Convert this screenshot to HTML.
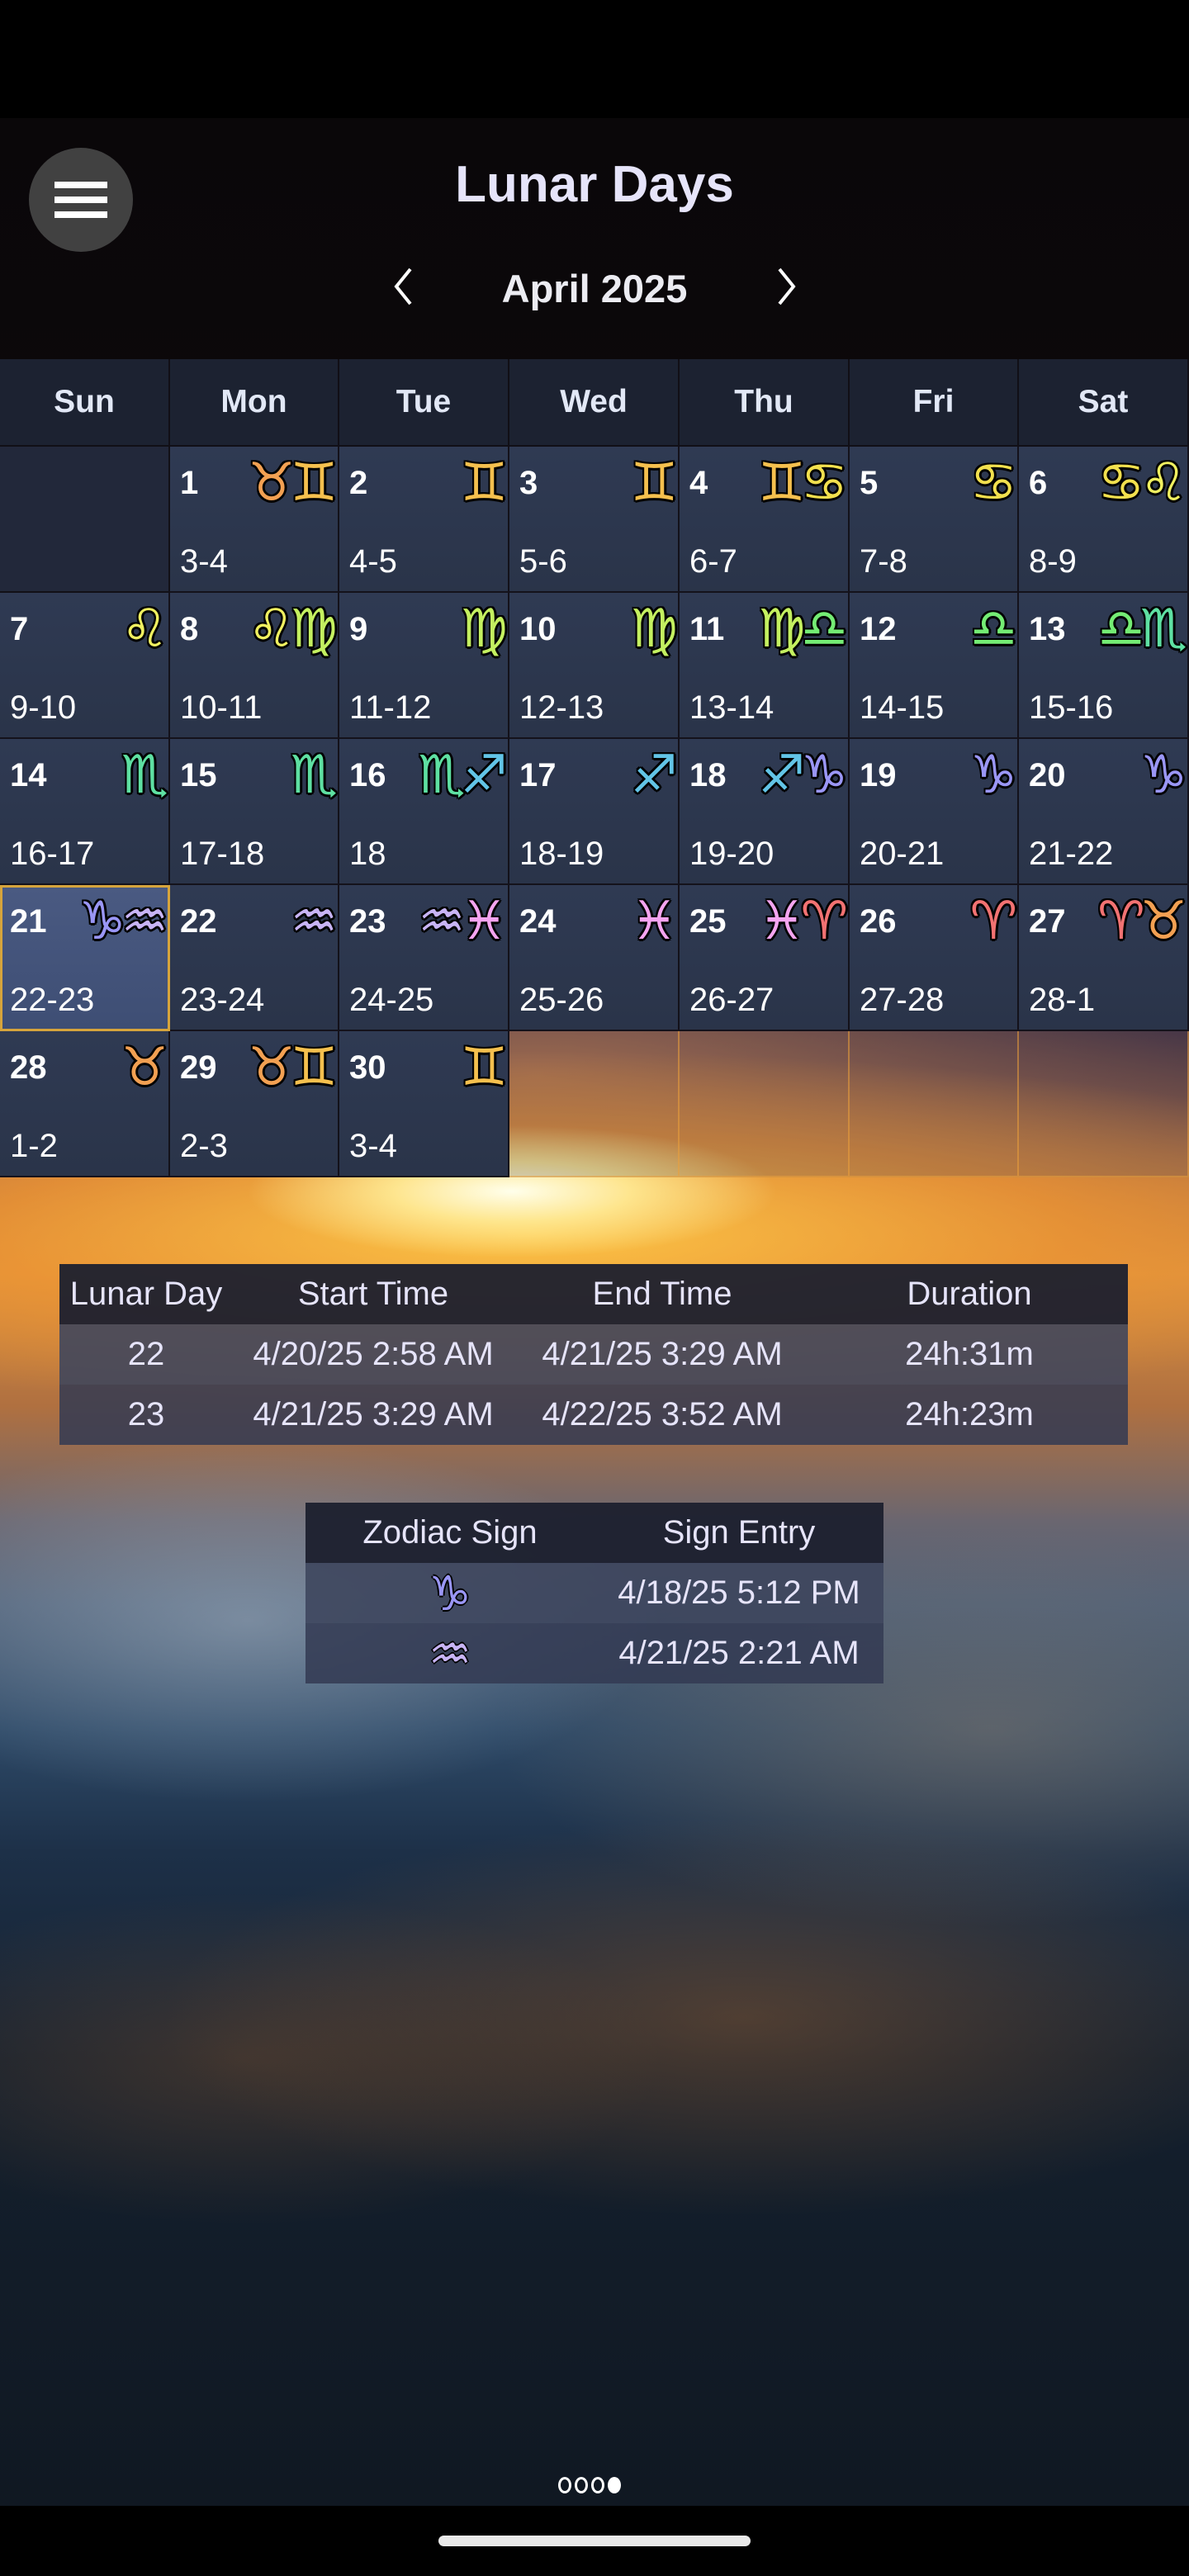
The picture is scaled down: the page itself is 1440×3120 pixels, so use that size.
<!DOCTYPE html>
<html><head><meta charset="utf-8"><style>
*{margin:0;padding:0;box-sizing:border-box}
body{width:1440px;height:3120px;position:relative;overflow:hidden;background:#000;font-family:"Liberation Sans",sans-serif}
#bg{position:absolute;left:0;top:143px;width:1440px;height:2892px;
background:
radial-gradient(ellipse 320px 80px at 620px 1300px,rgba(255,255,235,1),rgba(255,235,150,.9) 45%,rgba(255,200,80,0) 100%),
radial-gradient(ellipse 1200px 220px at 640px 1350px,rgba(255,200,70,.95),rgba(240,150,50,.75) 55%,rgba(210,110,50,0) 100%),
radial-gradient(ellipse 800px 260px at 650px 1160px,rgba(220,140,80,.7),rgba(140,80,80,0) 100%),
radial-gradient(ellipse 500px 220px at 300px 1820px,rgba(170,185,200,.5),rgba(100,130,160,0) 100%),
radial-gradient(ellipse 600px 240px at 1200px 1950px,rgba(150,130,110,.45),rgba(100,100,110,0) 100%),
radial-gradient(ellipse 700px 240px at 900px 2300px,rgba(150,95,50,.45),rgba(60,50,50,0) 100%),
radial-gradient(ellipse 500px 200px at 300px 2350px,rgba(140,90,50,.35),rgba(60,50,50,0) 100%),
linear-gradient(180deg,#0a0709 0px,#0c080b 400px,#221a26 850px,#4a3440 1100px,#a86a44 1260px,#d89040 1400px,#b07040 1560px,#6a6670 1700px,#4e6078 1800px,#2e4a68 1950px,#1d3048 2100px,#14202e 2350px,#101822 2892px)}
.hdr{position:absolute;color:#e6e4fa;font-weight:bold;text-align:center}
.menu{position:absolute;left:35px;top:179px;width:126px;height:126px;border-radius:50%;background:#414141}
.menu i{position:absolute;left:31px;width:64px;height:8px;background:#fff}
.grid{position:absolute;left:0;top:435px;width:1440px}
.c{position:absolute;width:206px;border-right:2px solid rgba(15,12,18,.85);border-bottom:2px solid rgba(15,12,18,.85);color:#fff}
.h{height:106px;background:#1c2231;color:#e2e8f6;font-weight:bold;font-size:39px;text-align:center;line-height:104px}
.d{height:177px;background:linear-gradient(180deg,#2f3a53,#2a3449)}
.d .n{position:absolute;left:12px;top:22px;font-size:40px;font-weight:bold}
.d .r{position:absolute;left:12px;top:117px;font-size:40px}
.d .z{position:absolute;right:6px;top:4px;font-family:"DejaVu Sans",sans-serif;font-size:64px;line-height:80px;letter-spacing:-6px;
text-shadow:-2px -2px 0 #000,2px -2px 0 #000,-2px 2px 0 #000,2px 2px 0 #000,0 3px 0 #000,0 -2px 0 #000,3px 0 0 #000,-2px 0 0 #000}
.e{height:177px;background:rgba(50,60,95,.22);border-color:rgba(235,160,60,.55)}
.blank{background:#22283a}
.sel{background:linear-gradient(180deg,#4a5a82,#3e4e74);outline:3px solid #d6a43c;outline-offset:-3px}
table{position:absolute;border-collapse:collapse;color:#e6e4fa;font-size:40px;text-align:center;white-space:nowrap}
td,th{height:73px;font-weight:normal;padding:0}
tr.th{background:rgba(28,32,46,.95)}
tr.r1{background:rgba(60,68,92,.88)}
tr.r2{background:rgba(50,58,82,.85)}
.zg{font-family:'DejaVu Sans',sans-serif;font-size:58px;text-shadow:-2px 0 #000,2px 0 #000,0 2px #000,0 -2px #000}
</style></head><body>
<div id="bg"></div>
<div class="menu"><i style="top:41px"></i><i style="top:59px"></i><i style="top:77px"></i></div>
<div class="hdr" style="left:420px;width:600px;top:188px;font-size:62px">Lunar Days</div>
<div class="hdr" style="left:520px;width:400px;top:322px;font-size:47px;color:#ececf2">April 2025</div>
<svg style="position:absolute;left:470px;top:322px" width="36" height="50"><path d="M27 4 L10 25 L27 46" stroke="#fff" stroke-width="4" fill="none"/></svg>
<svg style="position:absolute;left:935px;top:322px" width="36" height="50"><path d="M9 4 L26 25 L9 46" stroke="#fff" stroke-width="4" fill="none"/></svg>

<div class="grid" id="g"></div>

<table style="left:72px;top:1531px;width:1294px">
<tr class="th"><th style="width:210px">Lunar Day</th><th style="width:340px">Start Time</th><th style="width:360px">End Time</th><th>Duration</th></tr>
<tr class="r1"><td>22</td><td>4/20/25 2:58 AM</td><td>4/21/25 3:29 AM</td><td>24h:31m</td></tr>
<tr class="r2"><td>23</td><td>4/21/25 3:29 AM</td><td>4/22/25 3:52 AM</td><td>24h:23m</td></tr>
</table>
<table style="left:370px;top:1820px;width:700px">
<tr class="th"><th style="width:350px">Zodiac Sign</th><th>Sign Entry</th></tr>
<tr class="r1"><td class="zg" style="color:#9a96f5">♑&#xFE0E;</td><td>4/18/25 5:12 PM</td></tr>
<tr class="r2"><td class="zg" style="color:#c8b4f5">♒&#xFE0E;</td><td>4/21/25 2:21 AM</td></tr>
</table>

<div style="position:absolute;left:676px;top:3000px;display:flex;gap:4px">
<span style="width:16px;height:20px;border:3px solid #fff;border-radius:50%"></span>
<span style="width:16px;height:20px;border:3px solid #fff;border-radius:50%"></span>
<span style="width:16px;height:20px;border:3px solid #fff;border-radius:50%"></span>
<span style="width:16px;height:20px;background:#fff;border-radius:50%"></span>
</div>
<div style="position:absolute;left:531px;top:3071px;width:378px;height:13px;border-radius:7px;background:#e8e8e8"></div>

<script>
var C={a:'#f27272',t:'#f2a052',g:'#f5c04e',c:'#f2e04e',l:'#f0f060',v:'#c4f060',b:'#74ec74',s:'#5ee0a2',p:'#62c4e6',k:'#9a96f5',q:'#c8b4f5',x:'#f4a4f0'};
var S={a:'♈',t:'♉',g:'♊',c:'♋',l:'♌',v:'♍',b:'♎',s:'♏',p:'♐',k:'♑',q:'♒',x:'♓'};
var days=[null,[1,'tg','3-4'],[2,'g','4-5'],[3,'g','5-6'],[4,'gc','6-7'],[5,'c','7-8'],[6,'cl','8-9'],
[7,'l','9-10'],[8,'lv','10-11'],[9,'v','11-12'],[10,'v','12-13'],[11,'vb','13-14'],[12,'b','14-15'],[13,'bs','15-16'],
[14,'s','16-17'],[15,'s','17-18'],[16,'sp','18'],[17,'p','18-19'],[18,'pk','19-20'],[19,'k','20-21'],[20,'k','21-22'],
[21,'kq','22-23'],[22,'q','23-24'],[23,'qx','24-25'],[24,'x','25-26'],[25,'xa','26-27'],[26,'a','27-28'],[27,'at','28-1'],
[28,'t','1-2'],[29,'tg','2-3'],[30,'g','3-4'],'e','e','e','e'];
var h='',W=1440/7,names=['Sun','Mon','Tue','Wed','Thu','Fri','Sat'];
for(var i=0;i<7;i++)h+='<div class="c h" style="left:'+Math.round(i*W)+'px;top:0;width:'+(Math.round((i+1)*W)-Math.round(i*W))+'px">'+names[i]+'</div>';
days.forEach(function(d,k){var col=k%7,row=Math.floor(k/7);var st='left:'+Math.round(col*W)+'px;top:'+(106+row*177)+'px;width:'+(Math.round((col+1)*W)-Math.round(col*W))+'px';
if(d===null){h+='<div class="c d blank" style="'+st+'"></div>';return}
if(d==='e'){h+='<div class="c e" style="'+st+'"></div>';return}
var z='';for(var j=0;j<d[1].length;j++){var s=d[1][j];z+='<span style="color:'+C[s]+'">'+S[s]+'\uFE0E</span>'}
h+='<div class="c d'+(d[0]==21?' sel':'')+'" style="'+st+'"><span class="n">'+d[0]+'</span><span class="z">'+z+'</span><span class="r">'+d[2]+'</span></div>'});
document.getElementById('g').innerHTML=h;
</script>
</body></html>
